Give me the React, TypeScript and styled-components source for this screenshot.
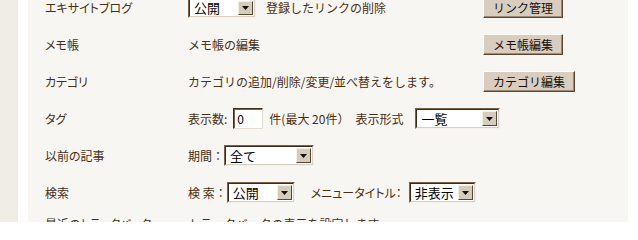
import React from "react";
import styled, { createGlobalStyle } from "styled-components";

const Global = createGlobalStyle`
  html, body { margin: 0; padding: 0; background: #ffffff; }
  body {
    font-family: "Noto Sans CJK JP", "Noto Sans", sans-serif;
    font-size: 12px;
    color: #4a2e14;
    overflow: hidden;
  }
`;

const Page = styled.div`
  display: flex;
  height: 222px;
  overflow: hidden;
  background: #ffffff;
`;

const LeftStripe = styled.div`
  width: 18px;
  flex: none;
  background: #f0ece6;
`;

const Gutter = styled.div`
  width: 10px;
  flex: none;
  background: #ffffff;
`;

const Panel = styled.div`
  width: 600px;
  flex: none;
  background: #f8f6f2;
  padding-left: 17px;
  box-sizing: border-box;
  overflow: hidden;
`;

const Table = styled.div`
  margin-top: -11px;
  display: flex;
  flex-direction: column;
`;

const Row = styled.div<{ $h?: number }>`
  display: grid;
  grid-template-columns: 143px 295px auto;
  align-items: center;
  height: ${(p) => p.$h ?? 37}px;
  flex: none;
`;

const Label = styled.div`
  line-height: 14px;
  white-space: nowrap;
  font-feature-settings: "palt";
`;

const Content = styled.div<{ $span?: boolean }>`
  display: flex;
  align-items: center;
  white-space: nowrap;
  line-height: 14px;
  grid-column: ${(p) => (p.$span ? "2 / 4" : "auto")};
`;

const Cell = styled.div`
  display: flex;
  align-items: center;
`;

const Text = styled.span<{ $ml?: number; $mr?: number; $palt?: boolean }>`
  margin-left: ${(p) => p.$ml ?? 0}px;
  margin-right: ${(p) => p.$mr ?? 0}px;
  font-feature-settings: ${(p) => (p.$palt ? '"palt"' : "normal")};
`;

const Button = styled.button`
  height: 21px;
  box-sizing: border-box;
  padding: 0 9px;
  background: #d8cdbf;
  border: 1px solid;
  border-color: #fffbf5 #5e442a #5e442a #fffbf5;
  box-shadow: inset -1px -1px 0 #9c8a74;
  font-family: inherit;
  font-size: 12px;
  color: #1a1008;
  line-height: 17px;
  cursor: pointer;
`;

const SelectOuter = styled.div<{ $w: number; $h?: number }>`
  display: inline-flex;
  flex: none;
  box-sizing: border-box;
  width: ${(p) => p.$w}px;
  height: ${(p) => p.$h ?? 20}px;
  border: 1px solid;
  border-color: #7a6248 #f4f0ea #f4f0ea #7a6248;
`;

const SelectInner = styled.div`
  flex: 1;
  display: flex;
  align-items: center;
  box-sizing: border-box;
  border: 1px solid;
  border-color: #3e2a16 #d8d0c4 #d8d0c4 #3e2a16;
  background: #ffffff;
  padding: 1px;
`;

const SelectValue = styled.span`
  flex: 1;
  padding-left: 3px;
  color: #000;
  font-size: 13px;
  line-height: 14px;
`;

const ArrowBox = styled.span`
  width: 15px;
  align-self: stretch;
  box-sizing: border-box;
  display: flex;
  align-items: center;
  justify-content: center;
  background: #d6ccbe;
  border: 1px solid;
  border-color: #f4efe8 #5a4632 #5a4632 #f4efe8;
`;

const Input = styled.div`
  width: 30px;
  height: 21px;
  flex: none;
  box-sizing: border-box;
  border: 1px solid;
  border-color: #3e2a16 #e4dcd0 #e4dcd0 #3e2a16;
  box-shadow: inset 1px 1px 0 #7a6248;
  background: #ffffff;
  color: #000;
  padding-left: 3px;
  display: flex;
  align-items: center;
  font-size: 12px;
`;

const Arrow = () => (
  <svg width="7" height="4" viewBox="0 0 7 4">
    <path d="M0 0h7L3.5 4z" fill="#111" />
  </svg>
);

const Select: React.FC<{ value: string; w: number; h?: number }> = ({ value, w, h }) => (
  <SelectOuter $w={w} $h={h}>
    <SelectInner>
      <SelectValue>{value}</SelectValue>
      <ArrowBox>
        <Arrow />
      </ArrowBox>
    </SelectInner>
  </SelectOuter>
);

export default function App() {
  return (
    <>
      <Global />
      <Page>
        <LeftStripe />
        <Gutter />
        <Panel>
          <Table>
            <Row>
              <Label>エキサイトブログ</Label>
              <Content>
                <Select value="公開" w={68} h={20} />
                <Text $ml={10}>登録したリンクの削除</Text>
              </Content>
              <Cell>
                <Button>リンク管理</Button>
              </Cell>
            </Row>
            <Row>
              <Label>メモ帳</Label>
              <Content>
                <Text>メモ帳の編集</Text>
              </Content>
              <Cell>
                <Button>メモ帳編集</Button>
              </Cell>
            </Row>
            <Row>
              <Label>カテゴリ</Label>
              <Content>
                <Text>カテゴリの追加/削除/変更/並べ替えをします。</Text>
              </Content>
              <Cell>
                <Button>カテゴリ編集</Button>
              </Cell>
            </Row>
            <Row>
              <Label>タグ</Label>
              <Content $span>
                <Text $mr={6}>表示数:</Text>
                <Input>0</Input>
                <Text $ml={6}>件(最大 20件）</Text>
                <Text $ml={6} $mr={12}>表示形式</Text>
                <Select value="一覧" w={85} h={21} />
              </Content>
            </Row>
            <Row>
              <Label>以前の記事</Label>
              <Content $span>
                <Text>期間：</Text>
                <Select value="全て" w={90} h={21} />
              </Content>
            </Row>
            <Row>
              <Label>検索</Label>
              <Content $span>
                <Text>検 索：</Text>
                <Select value="公開" w={68} h={21} />
                <Text $ml={16} $mr={7} $palt>メニュータイトル：</Text>
                <Select value="非表示" w={67} h={21} />
              </Content>
            </Row>
            <Row $h={26}>
              <Label>最近のトラックバック</Label>
              <Content $span>
                <Text>トラックバックの表示を設定します。</Text>
              </Content>
            </Row>
          </Table>
        </Panel>
      </Page>
    </>
  );
}
